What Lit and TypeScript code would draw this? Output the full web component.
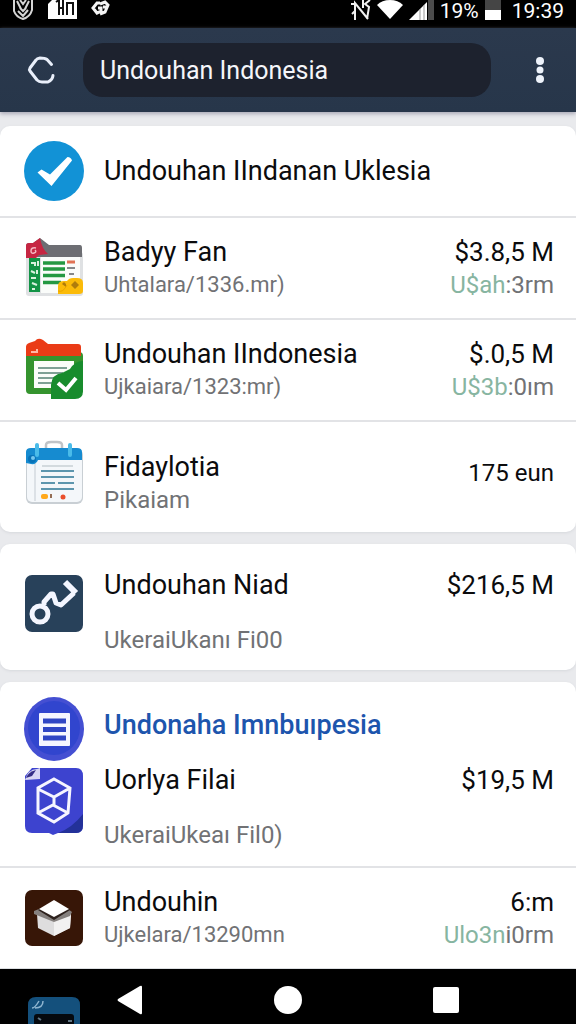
import { LitElement, html, css, svg, nothing } from "lit";
import { customElement, property } from "lit/decorators.js";

interface Item {
  icon: string;
  title: string;
  sub?: string;
  price?: string;
  priceTag?: string;
  priceNote?: string;
  variant?: string;
}

const icons: Record<string, unknown> = {
  check: svg`
    <circle cx="30" cy="31" r="30" fill="#1292d6"/>
    <path d="M13.500 32.500 L17.500 29.500 L26 34.500 L43.500 17 Q47 17 48 20.500 L27.500 46 Z" fill="#fff"/>`,
  ledger: svg`
    <rect x="2" y="12" width="57" height="44" rx="3" fill="#dfe1e3"/>
    <rect x="17" y="17" width="39" height="36" fill="#fafcfa"/>
    <path d="M2 17V6Q2 3 5 3H9L16 -2L25 5H56Q58 5 58 8V17Z" fill="#6d6e73"/>
    <path d="M2 18V6Q2 3 5 3H9L16 -2Q18 9 24 14L15 15L12 18Z" fill="#c62642"/>
    <path d="M12 8q-5-1-5 3q0 3 3 2q3-1 1-3" stroke="#f5b8c2" stroke-width="1.500" fill="none"/>
    <rect x="5" y="18" width="11" height="34" fill="#129345"/>
    <path d="M7 23h4v3m3-5v5M7 31l4 2m2-3v4M7 38h5m-4 5l5 2M8 49h3" stroke="#d8f1dd" stroke-width="2" fill="none"/>
    <path d="M19 23h22M19 29h22M19 35.500h22M19 42.500h18" stroke="#249842" stroke-width="3.500"/>
    <path d="M43 22h8" stroke="#e07355" stroke-width="3"/>
    <path d="M43 28h8M45 34h5" stroke="#85878a" stroke-width="2"/>
    <path d="M34 54V46Q34 41 40 41H43Q45 38 49 38H53Q59 38 59 43V51Q59 54 55 54Z" fill="#fbbb09"/>
    <path d="M51 41l4 4l-4 4l-4-4zM38 44l2-2l2 2v3" fill="#af7c0c"/>
    <path d="M34 51q5 2 9-6" stroke="#eaa500" fill="none"/>`,
  calendarCheck: svg`
    <rect x="2" y="11" width="57" height="42" rx="4" fill="#35942e"/>
    <path d="M2 15V6Q2 3 5 2L11 0Q14-4 19-1L24 3H54Q57 3 57 6V15Z" fill="#ea3b16"/>
    <path d="M7 11h6V8" stroke="#ffb7a5" stroke-width="2" fill="none"/>
    <path d="M10 20H50V47H10Z" fill="#fbfdf9"/>
    <path d="M14 27h29M14 32h25M14 37h18M14 42h14" stroke="#7fa195" stroke-width="2"/>
    <path d="M27 58V44Q28 33 38 32L46 28Q51 20 59 20V50Q59 58 51 58Z" fill="#188c2d"/>
    <path d="M34 42l8 7L52 37" fill="none" stroke="#fff" stroke-width="4"/>`,
  planner: svg`
    <path d="M22 6V3Q22 0 27 0H33Q38 0 38 3V6" stroke="#c0c4c8" stroke-width="2.500" fill="none"/>
    <rect x="2" y="7" width="57" height="55" rx="6" fill="#c9cfd4"/>
    <rect x="3" y="7" width="55" height="53" rx="5" fill="#f4f7fa"/>
    <path d="M11 18v41" stroke="#dce1e6" stroke-width="2"/>
    <path d="M2 21V10Q2 6 7 6H53Q58 6 58 10V18H14Q12 23 7 22Z" fill="#168bd0"/>
    <circle cx="8" cy="17" r="4" fill="#0873b8"/><circle cx="9" cy="16" r="2" fill="#75c7ee"/>
    <path d="M13 3v10M46 3v10" stroke="#4abbe9" stroke-width="4" stroke-linecap="round"/>
    <path d="M18 24h31" stroke="#c9d0d5" stroke-width="1.500"/>
    <path d="M17 29h33M17 35h33M17 41h14M34 41h16M17 47h33" stroke="#5d96ae" stroke-width="2"/>
    <rect x="17" y="52" width="7" height="5" rx="2" fill="#ffa81b"/><path d="M27 52v4" stroke="#946e56" stroke-width="2"/>
    <circle cx="39" cy="55" r="2.500" fill="#ea4f2c"/>`,
  key: svg`
    <rect x="1" y="1" width="58" height="57" rx="7" fill="#28415a"/>
    <circle cx="16" cy="40" r="8" fill="none" stroke="#f4f6ff" stroke-width="5"/>
    <path d="M20 31L20 28L27 20L29 20L32 29L37 31L50 19" fill="none" stroke="#f4f6ff" stroke-width="5" stroke-linejoin="round"/>
    <path d="M41 8L52 19" fill="none" stroke="#f4f6ff" stroke-width="6"/>`,
  list: svg`
    <ellipse cx="30" cy="32" rx="30" ry="32" fill="#444fd2"/>
    <ellipse cx="30" cy="31" rx="26" ry="27" fill="#3145ce"/>
    <rect x="15" y="16" width="31" height="33" rx="1" fill="#f5f6ff"/>
    <path d="M19 24h23M19 32.500h23M19 41h23" stroke="#3046c4" stroke-width="5"/>`,
  cube: svg`
    <path d="M8 0H52Q59 0 59 8V57Q59 65 52 65H34L29 67L25 65H8Q1 65 1 58V8Z" fill="#3d43cf"/>
    <path d="M34 65Q48 60 59 46V57Q59 65 52 65Z" fill="#233199"/>
    <path d="M1 12Q4 1 13 1L16 0V11Z" fill="#d8d6f4"/><path d="M2 10Q4 4 12 2L8 8Z" fill="#352e86"/>
    <path d="M30 11L46 20L44 45L30 54L14 45V20ZM14 21L30 29L46 20M30 29V37M14 45L29 37L44 45" fill="none" stroke="#f6f5ff" stroke-width="3"/>`,
  box: svg`
    <rect x="1" y="0" width="58" height="56" rx="7" fill="#371607"/>
    <path d="M13 24L30 31L47 24L46 38L30 46L14 38Z" fill="#deddde"/>
    <path d="M30 31L47 24L46 38L30 46Z" fill="#f2f1f1"/>
    <path d="M10 21L15 19L30 28L44 19L48 22L46 26L30 32L10 24Z" fill="#85807e"/>
    <path d="M14 20L30 30L46 20L43 18L30 25L17 18Z" fill="#2d211d"/>
    <path d="M30 10L45 19L30 27L15 19Z" fill="#fff"/>`,
};

const iconHeights: Record<string, number> = {
  check: 62, ledger: 56, calendarCheck: 58, planner: 62, key: 58, list: 64, cube: 67, box: 56,
};

const groups: Item[][] = [
  [
    { icon: "check", title: "Undouhan IIndanan Uklesia", variant: "heading" },
    { icon: "ledger", title: "Badyy Fan", sub: "Uhtalara/1336.mr)", price: "$3.8,5 M", priceTag: "U$ah", priceNote: ":3rm", variant: "detailed" },
    { icon: "calendarCheck", title: "Undouhan IIndonesia", sub: "Ujkaiara/1323:mr)", price: "$.0,5 M", priceTag: "U$3b", priceNote: ":0ım", variant: "detailed" },
    { icon: "planner", title: "Fidaylotia", sub: "Pikaiam", price: "175 eun", variant: "tall" },
  ],
  [{ icon: "key", title: "Undouhan Niad", sub: "UkeraiUkanı Fi00", price: "$216,5 M", variant: "spread" }],
  [
    { icon: "list", title: "Undonaha Imnbuıpesia", variant: "link" },
    { icon: "cube", title: "Uorlya Filai", sub: "UkeraiUkeaı Fil0)", price: "$19,5 M", variant: "joined" },
    { icon: "box", title: "Undouhin", sub: "Ujkelara/13290mn", price: "6:m", priceTag: "Ulo3n", priceNote: "i0rm", variant: "detailed" },
  ],
];

@customElement("list-row")
class ListRow extends LitElement {
  @property({ attribute: false }) item!: Item;

  static styles = css`
    :host { display: block; }
    .row {
      display: grid;
      grid-template-columns: 60px minmax(0, 1fr) auto;
      column-gap: 20px;
      align-items: center;
      min-height: 100px;
      padding: 0 22px 0 24px;
      box-sizing: border-box;
    }
    .icon { display: block; width: 60px; overflow: visible; }
    .title, .price { font-size: 27px; line-height: 34px; color: #0b0b0d; white-space: nowrap; }
    .title { font-weight: 400; margin: 0; }
    .price { font-size: 26px; }
    .sub, .note { font-size: 24px; line-height: 32px; color: #717275; white-space: nowrap; }
    .detailed .sub { font-size: 22px; }
    .side { text-align: right; }
    .tag { color: #87b5a1; }
    .heading { min-height: 90px; }
    .tall { min-height: 110px; padding-bottom: 8px; }
    .tall .text { padding-top: 20px; }
    .tall .price { font-size: 24px; }
    .spread { min-height: 126px; padding-bottom: 8px; }
    .spread .text, .joined .text { display: grid; row-gap: 22px; }
    .spread .text { padding-top: 18px; }
    .spread .side, .joined .side { align-self: start; }
    .spread .side { padding-top: 24px; }
    .link { min-height: 80px; padding-top: 6px; align-items: start; }
    .link .icon { margin-top: 9px; }
    .link .text { padding-top: 20px; }
    .anchor { color: #1d55ad; font-weight: 500; text-decoration: none; }
    .joined { min-height: 104px; align-items: start; }
    .joined .icon { margin-top: 6px; }
    .joined .text, .joined .side { padding-top: 1px; }
  `;

  render() {
    const i = this.item;
    const h = iconHeights[i.icon];
    return html`
      <div class="row ${i.variant ?? ""}">
        <svg class="icon" viewBox="0 0 60 ${h}" height=${h} aria-hidden="true">${icons[i.icon]}</svg>
        <div class="text">
          <h2 class="title">${i.variant === "link" ? html`<a class="anchor" href="#">${i.title}</a>` : i.title}</h2>
          ${i.sub ? html`<div class="sub">${i.sub}</div>` : nothing}
        </div>
        ${i.price
          ? html`<div class="side">
              <div class="price">${i.price}</div>
              ${i.priceTag ? html`<div class="note"><span class="tag">${i.priceTag}</span>${i.priceNote}</div>` : nothing}
            </div>`
          : nothing}
      </div>
    `;
  }
}

@customElement("app-root")
class AppRoot extends LitElement {
  static styles = css`
    :host {
      display: flex;
      flex-direction: column;
      min-height: 100vh;
      background: #e9eaed;
      font-family: Roboto, "Liberation Sans", sans-serif;
    }
    .status {
      display: flex;
      justify-content: space-between;
      height: 28px;
      padding: 0 12px;
      background: #000;
      color: #fff;
    }
    .status-group { display: flex; font-size: 21px; line-height: 22px; }
    .status-group.left { gap: 14px; }
    .status-group.right { gap: 6px; }
    .time { margin-left: 5px; }
    .status-icon { display: block; flex: none; }
    .bar {
      display: flex;
      align-items: center;
      height: 84px;
      background: linear-gradient(#2b394d, #27364a);
      box-shadow: 0 2px 4px #aaaab8;
    }
    .icon-button {
      display: grid;
      place-items: center;
      border: 0;
      padding: 0;
      background: none;
      cursor: pointer;
    }
    .back { width: 83px; height: 84px; }
    .more { width: 72px; height: 84px; margin-left: 13px; }
    .search {
      flex: 1;
      min-width: 0;
      height: 54px;
      box-sizing: border-box;
      border: 0;
      border-radius: 20px;
      padding: 0 17px;
      background: #1d222e;
      color: #f5f6fa;
      font: 400 25px/34px Roboto, "Liberation Sans", sans-serif;
      outline: none;
    }
    .content { display: grid; gap: 12px; padding-top: 14px; }
    .card {
      border-radius: 10px;
      background: #fff;
      box-shadow: 0 1px 3px #d6d8dc;
      overflow: hidden;
    }
    .card:last-child { border-radius: 10px 10px 0 0; }
    .divided { border-top: 2px solid #e2e3e6; }
    .nav {
      position: relative;
      display: grid;
      grid-template-columns: repeat(3, 1fr);
      height: 55px;
      margin-top: auto;
      padding: 0 51px;
      background: #000;
      overflow: hidden;
    }
    .nav-button { height: 62px; }
    .peek { position: absolute; left: 28px; bottom: 0; }
  `;

  render() {
    return html`
      <header>
        <div class="status">
          <div class="status-group left">
            <svg class="status-icon" width="22" height="21" viewBox="0 0 22 21" fill="none" stroke="#d5d5d5" stroke-width="2" aria-hidden="true">
              <path d="M2 0V11Q4 17 11 19Q18 17 20 10V0M5 1l4 8M17 1l-4 8M8 0l3 4l3-4M6 11l5 5l5-6M8 8l3 3l3-3"/>
            </svg>
            <svg class="status-icon" width="29" height="19" viewBox="0 0 29 19" aria-hidden="true">
              <path d="M0 19V4L4 0H29V19Z" fill="#fff"/>
              <path d="M8 2l3-2v15M15 0v15M11 8h4M19 15V3h6v12" fill="none" stroke="#111" stroke-width="2"/>
            </svg>
            <svg class="status-icon" width="19" height="17" viewBox="0 0 19 17" fill="none" stroke="#f4f4f4" stroke-width="3" aria-hidden="true">
              <path d="M9 3H6L2 8L6 13L10 11V8H7M9 4L14 2L17 5L14 12L9 14M12 7h4"/>
            </svg>
          </div>
          <div class="status-group right">
            <svg class="status-icon" width="20" height="20" viewBox="0 0 20 20" fill="none" stroke="#f1f1f1" stroke-width="2" aria-hidden="true">
              <path d="M4 20V3L17 19M0 4h5M19 0l-5 4l4 3l-2 12M1 14l3-3M12 0v8"/>
            </svg>
            <svg class="status-icon" width="26" height="19" viewBox="0 0 26 19" aria-hidden="true"><path d="M0 5Q5 0 13 0Q21 0 26 5L13 19Z" fill="#fff"/></svg>
            <svg class="status-icon" width="25" height="20" viewBox="0 0 25 20" aria-hidden="true">
              <path d="M0 20L18 2V20Z" fill="#fff"/><path d="M11 9v11M15 5v15" stroke="#999"/><path d="M19 0h6v20h-6z" fill="#4b4b4b"/>
            </svg>
            <span>19%</span>
            <svg class="status-icon" width="16" height="20" viewBox="0 0 16 20" aria-hidden="true"><path d="M0 0h16v10H0z" fill="#454545"/><path d="M0 10h16v10H0z" fill="#fff"/></svg>
            <span class="time">19:39</span>
          </div>
        </div>
        <div class="bar">
          <button class="icon-button back" aria-label="Back">
            <svg width="30" height="28" viewBox="0 0 30 28" fill="none" stroke="#e9effa" stroke-width="3" stroke-linecap="round" stroke-linejoin="round" aria-hidden="true">
              <path d="M24.500 8.500L20 3.500Q18 2 13 2Q10 2.500 9 4L3 12Q2 13.500 3 15L10 24Q12 26 15 26L21 26Q25.500 24 26 19.500"/>
            </svg>
          </button>
          <input class="search" type="text" aria-label="Search" .value=${"Undouhan Indonesia"} />
          <button class="icon-button more" aria-label="More options">
            <svg width="8" height="26" viewBox="0 0 8 26" fill="#eef3fb" aria-hidden="true"><circle cx="4" cy="4" r="4"/><circle cx="4" cy="13" r="3.500"/><circle cx="4" cy="22" r="4"/></svg>
          </button>
        </div>
      </header>
      <main class="content">
        ${groups.map(
          (g) => html`<section class="card">
            ${g.map((item, n) => html`<list-row class=${n > 0 && item.variant !== "joined" ? "divided" : ""} .item=${item}></list-row>`)}
          </section>`
        )}
      </main>
      <nav class="nav">
        <svg class="peek" width="52" height="27" viewBox="0 0 52 27" aria-hidden="true">
          <path d="M0 27V8Q0 0 8 0H44Q52 0 52 8V27Z" fill="#14507c"/>
          <path d="M6 27V20Q6 17 9 17H43Q46 17 46 20V27Z" fill="#05090e"/>
          <path d="M4 11Q7 11 11 4M7 11Q15 11 15 4" stroke="#8fb5d0" stroke-width="1.500" fill="none"/>
          <path d="M10 21l3 2M40 24h4" stroke="#627684" stroke-width="2"/>
        </svg>
        <button class="icon-button nav-button" aria-label="Back"><svg width="26" height="30" viewBox="0 0 26 30"><path d="M25 2V28Q25 30 23 29L1 16Q0 15 1 14L23 1Q25 0 25 2Z" fill="#fff"/></svg></button>
        <button class="icon-button nav-button" aria-label="Home"><svg width="28" height="28" viewBox="0 0 28 28"><circle cx="14" cy="14" r="14" fill="#fff"/></svg></button>
        <button class="icon-button nav-button" aria-label="Recent apps"><svg width="26" height="26" viewBox="0 0 26 26"><rect width="26" height="26" rx="2" fill="#fff"/></svg></button>
      </nav>
    `;
  }
}
